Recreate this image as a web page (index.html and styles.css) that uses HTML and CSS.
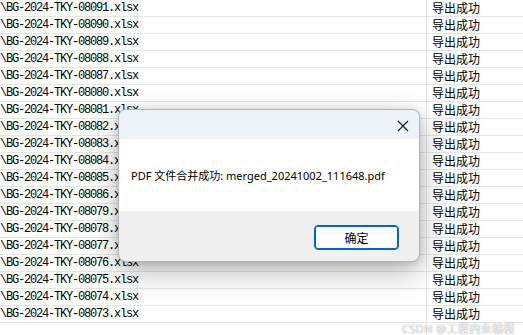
FILE: index.html
```html
<!DOCTYPE html>
<html lang="zh">
<head>
<meta charset="utf-8">
<link rel="stylesheet" href="styles.css">
</head>
<body>
<div class="list">
  <div class="row"><div class="name">\BG-2024-TKY-08091.xlsx</div><div class="status">导出成功</div></div>
  <div class="row"><div class="name">\BG-2024-TKY-08090.xlsx</div><div class="status">导出成功</div></div>
  <div class="row"><div class="name">\BG-2024-TKY-08089.xlsx</div><div class="status">导出成功</div></div>
  <div class="row"><div class="name">\BG-2024-TKY-08088.xlsx</div><div class="status">导出成功</div></div>
  <div class="row"><div class="name">\BG-2024-TKY-08087.xlsx</div><div class="status">导出成功</div></div>
  <div class="row"><div class="name">\BG-2024-TKY-08080.xlsx</div><div class="status">导出成功</div></div>
  <div class="row"><div class="name">\BG-2024-TKY-08081.xlsx</div><div class="status">导出成功</div></div>
  <div class="row"><div class="name">\BG-2024-TKY-08082.xlsx</div><div class="status">导出成功</div></div>
  <div class="row"><div class="name">\BG-2024-TKY-08083.xlsx</div><div class="status">导出成功</div></div>
  <div class="row"><div class="name">\BG-2024-TKY-08084.xlsx</div><div class="status">导出成功</div></div>
  <div class="row"><div class="name">\BG-2024-TKY-08085.xlsx</div><div class="status">导出成功</div></div>
  <div class="row"><div class="name">\BG-2024-TKY-08086.xlsx</div><div class="status">导出成功</div></div>
  <div class="row"><div class="name">\BG-2024-TKY-08079.xlsx</div><div class="status">导出成功</div></div>
  <div class="row"><div class="name">\BG-2024-TKY-08078.xlsx</div><div class="status">导出成功</div></div>
  <div class="row"><div class="name">\BG-2024-TKY-08077.xlsx</div><div class="status">导出成功</div></div>
  <div class="row"><div class="name">\BG-2024-TKY-08076.xlsx</div><div class="status">导出成功</div></div>
  <div class="row"><div class="name">\BG-2024-TKY-08075.xlsx</div><div class="status">导出成功</div></div>
  <div class="row"><div class="name">\BG-2024-TKY-08074.xlsx</div><div class="status">导出成功</div></div>
  <div class="row"><div class="name">\BG-2024-TKY-08073.xlsx</div><div class="status">导出成功</div></div>
  <div class="row-empty"><div class="name"></div><div></div></div>
</div>

<div class="dialog">
  <div class="dialog-title">
    <svg class="close" width="12" height="12" viewBox="0 0 12 12"><path d="M1 1L11 11M11 1L1 11" stroke="#1a1a1a" stroke-width="1.1" fill="none"/></svg>
  </div>
  <div class="dialog-body">PDF 文件合并成功: merged_20241002_111648.pdf</div>
  <div class="dialog-footer"><button class="ok">确定</button></div>
</div>

<div class="watermark">CSDN @工程内业编程</div>
</body>
</html>
```

FILE: styles.css
```css
html, body {
  margin: 0;
  padding: 0;
  background: #ffffff;
  width: 523px;
  height: 335px;
  overflow: hidden;
}

.list {
  display: flex;
  flex-direction: column;
}

.row {
  display: grid;
  grid-template-columns: 427px 1fr;
  height: 17px;
  box-sizing: border-box;
  border-bottom: 1px solid #e6e6e6;
}

.name {
  border-right: 1px solid #e6e6e6;
  font-family: "Liberation Mono", monospace;
  font-size: 12px;
  letter-spacing: -1.2px;
  line-height: 16px;
  color: #000;
  white-space: nowrap;
  overflow: hidden;
}

.status {
  padding-left: 5px;
  font-family: "Noto Sans CJK SC", sans-serif;
  font-size: 12px;
  line-height: 16px;
  color: #000;
}

.row-empty {
  display: grid;
  grid-template-columns: 427px 1fr;
  height: 12px;
}

.dialog {
  position: absolute;
  left: 118px;
  top: 109px;
  width: 302px;
  height: 153px;
  box-sizing: border-box;
  border: 1px solid rgba(0, 0, 0, 0.25);
  border-radius: 8px;
  overflow: hidden;
  display: flex;
  flex-direction: column;
  box-shadow: 0 10px 30px rgba(0, 0, 0, 0.28), 0 2px 8px rgba(0, 0, 0, 0.14);
  background: #f0f0f0;
}

.dialog-title {
  height: 29px;
  background: #edf3f9;
  display: flex;
  justify-content: flex-end;
  align-items: center;
  padding-right: 10px;
  padding-top: 2px;
  box-sizing: border-box;
}

.close {
  display: block;
}

.dialog-body {
  height: 72px;
  background: #ffffff;
  display: flex;
  align-items: center;
  padding-left: 12px;
  font-family: "Noto Sans", "Noto Sans CJK SC", sans-serif;
  font-size: 11px;
  color: #000;
  white-space: nowrap;
}

.dialog-footer {
  flex: 1;
  display: flex;
  justify-content: flex-end;
  align-items: center;
  padding-right: 20px;
  padding-top: 2px;
}

.ok {
  width: 85px;
  height: 25px;
  box-sizing: border-box;
  background: #fdfdfd;
  border: 1px solid #0067c0;
  border-radius: 4px;
  box-shadow: inset 0 0 0 1px #0067c0;
  font-family: "Noto Sans CJK SC", sans-serif;
  font-size: 12px;
  color: #000;
  padding: 0;
}

.watermark {
  position: absolute;
  right: 8px;
  bottom: 1px;
  line-height: 10px;
  font-family: "Noto Sans", "Noto Sans CJK SC", sans-serif;
  font-size: 11px;
  letter-spacing: 0.4px;
  color: rgba(255, 255, 255, 0.9);
  text-shadow: 0 0 1px rgba(0, 0, 0, 0.35), 0 0 2px rgba(0, 0, 0, 0.2);
}
```
